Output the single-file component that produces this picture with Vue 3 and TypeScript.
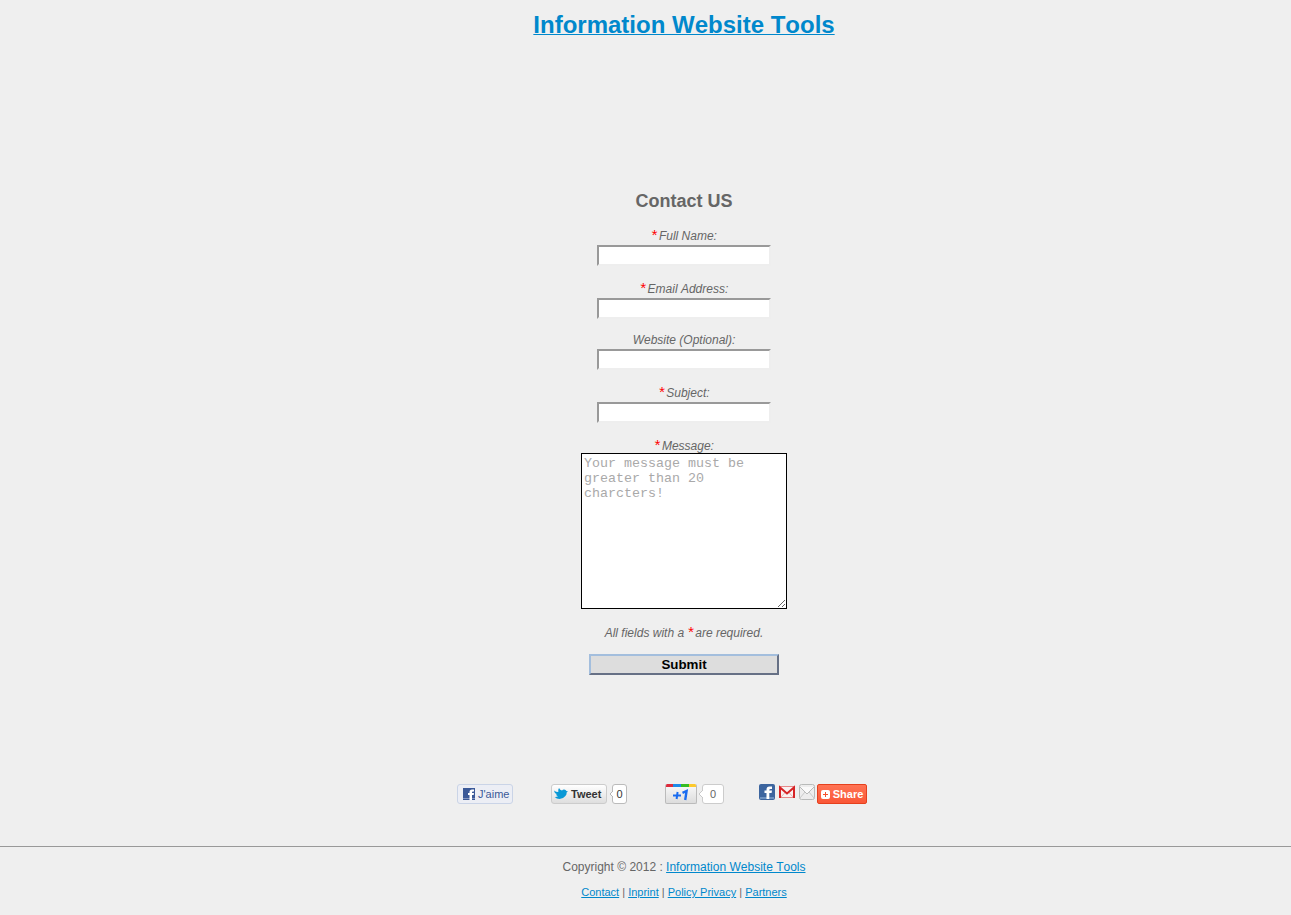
<script setup lang="ts">
interface Field {
  id: string
  label: string
  type: string
  required: boolean
}

const fields: Field[] = [
  { id: 'name', label: 'Full Name:', type: 'text', required: true },
  { id: 'email', label: 'Email Address:', type: 'text', required: true },
  { id: 'website', label: 'Website (Optional):', type: 'text', required: false },
  { id: 'subject', label: 'Subject:', type: 'text', required: true },
]

const footerLinks: string[] = ['Contact', 'Inprint', 'Policy Privacy', 'Partners']
</script>

<template>
  <div class="page">
    <header class="inset">
      <h1><a href="#">Information Website Tools</a></h1>
    </header>

    <main class="inset">
      <h2>Contact US</h2>
      <form @submit.prevent>
        <div v-for="f in fields" :key="f.id" class="field">
          <label :for="f.id" :class="{ plain: !f.required }"><span v-if="f.required" class="star">*</span>{{ f.label }}</label>
          <input :id="f.id" :type="f.type" />
        </div>
        <div class="field message">
          <label for="message"><span class="star">*</span>Message:</label>
          <textarea id="message" placeholder="Your message must be greater than 20 charcters!"></textarea>
        </div>
        <p class="note">All fields with a <span class="star">*</span>are required.</p>
        <button type="submit" class="submit">Submit</button>
      </form>
    </main>

    <section class="social">
      <div class="cell">
        <button type="button" class="like">
          <svg width="12" height="12" viewBox="0 0 12 12">
            <rect width="12" height="12" fill="#3b5998" />
            <rect y="10" width="12" height="1" fill="#8496c0" />
            <path d="M6.500 12V7H5V5H6.500V4Q6.500 1.500 9 1.500H11V3.500H10Q9 3.500 9 4.500V5H11L10.700 7H9V12Z" fill="#fff" />
          </svg>
          J'aime
        </button>
      </div>
      <div class="cell">
        <button type="button" class="tweet">
          <svg width="14" height="12" viewBox="0 0 14 12">
            <path d="M0 2.500Q2 4 4.300 4Q3.900 1.500 5 0Q6 2 8 2.600Q9.300 1 11 1.700Q12 2 12.400 3L14 3.400L12.600 4.500Q13 6 11.400 8Q9 11 5.500 11Q2.500 11 .7 9Q3 9.100 4 8.200Q2.300 7.800 2 6.500L3 6.300Q.2 5.200 0 2.500Z" fill="#0a99d6" />
          </svg>
          Tweet
        </button>
        <span class="count">
          <svg class="tip" width="4" height="6" viewBox="0 0 4 6"><path d="M4 0L1 3L4 6" fill="#fff" stroke="#b5b5b5" /></svg>0</span>
      </div>
      <div class="cell">
        <button type="button" class="plus" aria-label="+1">
          <span class="stripes"><i class="red"></i><i class="blue"></i><i class="green"></i><i class="yellow"></i></span>
          <svg width="16" height="12" viewBox="0 0 16 12" fill="none" stroke="#1a6cf0" stroke-width="2">
            <path d="M0 6.500H8M4.600 3L3.600 10" />
            <path d="M9.500 3.800L13.600 2L12.200 11" stroke-width="2.400" />
          </svg>
        </button>
        <span class="count wide">
          <svg class="tip" width="5" height="8" viewBox="0 0 5 8"><path d="M5 0L1 4L5 8" fill="#fff" stroke="#c8c8c8" /></svg>0</span>
      </div>
      <div class="cell share-cell">
        <a href="#" aria-label="Facebook">
          <svg width="16" height="16" viewBox="0 0 16 16">
            <rect width="16" height="16" rx="2" fill="#3c659f" />
            <rect x="1" y="13" width="14" height="2" fill="#6c91c0" />
            <path d="M7.500 15V9H5.500V6.500H7.500V5.500Q7.500 2.500 10.500 2.500H13V5H11.500Q10.300 5 10.300 6V6.500H13L12.600 9H10.300V15Z" fill="#fff" />
          </svg>
        </a>
        <a href="#" aria-label="Gmail">
          <svg width="16" height="16" viewBox="0 0 16 16">
            <rect y="2" width="16" height="12" rx="1" fill="#f9f1f1" />
            <path d="M2 13L6.500 8M14 13L9.500 8" fill="none" stroke="#e5b5b5" />
            <path d="M1 2.500H15M1 13.500H15" stroke="#e68989" />
            <path d="M1 14V3.500L8 9.500L15 3.500V14" fill="none" stroke="#d62326" stroke-width="2" />
          </svg>
        </a>
        <a href="#" aria-label="Email">
          <svg width="16" height="16" viewBox="0 0 16 16" fill="none">
            <rect x=".5" y=".5" width="15" height="15" rx="2" fill="#ededed" stroke="#b8bab9" />
            <path d="M1 3L8 10L15 3" fill="#fafafa" stroke="#b8bab9" />
            <path d="M1 14L6 8M15 14L10 8" stroke="#c8caca" />
          </svg>
        </a>
        <button type="button" class="share">
          <svg width="9" height="9" viewBox="0 0 9 9">
            <rect width="9" height="9" rx="2" fill="#fff" />
            <path d="M4.500 2V7M2 4.500H7" stroke="#f4512f" />
          </svg>
          Share
        </button>
      </div>
    </section>

    <footer>
      <p>Copyright © 2012 : <a href="#">Information Website Tools</a></p>
      <nav>
        <template v-for="(l, i) in footerLinks" :key="l"><template v-if="i > 0"> | </template><a href="#">{{ l }}</a></template>
      </nav>
    </footer>
  </div>
</template>

<style>
body {
  margin: 0;
  background: #efefef;
}
</style>

<style scoped>
.page {
  color: #666;
  font: 12px/16px "Liberation Sans", Arial, sans-serif;
  font-kerning: none;
  text-align: center;
}
.inset,
footer {
  padding-left: 77px;
}
a {
  color: #08c;
}
h1,
h2,
p {
  margin: 0;
}
h1 {
  padding-top: 11px;
  font-size: 24px;
  line-height: 28px;
}
h1 a {
  text-decoration-thickness: 1px;
}
h2 {
  margin-top: 151px;
  margin-bottom: 14px;
  font-size: 18px;
  line-height: 22px;
}
form {
  display: flex;
  flex-direction: column;
  align-items: center;
}
.field {
  display: flex;
  flex-direction: column;
  align-items: center;
  margin-bottom: 13px;
}
label {
  height: 19px;
  font-style: italic;
  line-height: 21px;
}
label.plain {
  height: 17px;
  line-height: 17px;
}
.message label {
  height: 17px;
}
.note {
  font-style: italic;
  line-height: 23px;
}
.star {
  margin-right: 2px;
  color: #f00;
  font-size: 15px;
  line-height: 16px;
}
input {
  box-sizing: border-box;
  width: 174px;
  height: 21px;
  padding: 1px;
  border: 2px solid;
  border-color: #999 #eee #eee #999;
  background: #fff;
}
textarea {
  box-sizing: border-box;
  width: 206px;
  height: 156px;
  margin: 0;
  padding: 2px;
  border: 1px solid #000;
  background: #fff;
  font-family: "Liberation Mono", monospace;
}
textarea::placeholder {
  color: #a9a9a9;
}
.submit {
  box-sizing: border-box;
  width: 190px;
  height: 21px;
  margin-top: 9px;
  padding: 0;
  border: 2px solid;
  border-color: #a3bedd #667085 #667085 #a3bedd;
  background: #ddd;
  color: #000;
  font-family: "Liberation Sans", Arial, sans-serif;
  font-weight: bold;
}
.social {
  display: grid;
  grid-template-columns: 94px 114px 94px 110px;
  justify-content: center;
  margin-top: 109px;
  padding-left: 35px;
}
.cell {
  display: flex;
  align-items: flex-start;
}
.social button {
  display: flex;
  box-sizing: border-box;
  height: 20px;
  align-items: center;
  gap: 3px;
  padding: 0;
  font: 11px/14px "Liberation Sans", Arial, sans-serif;
  white-space: nowrap;
}
.social button.like {
  width: 56px;
  padding-left: 5px;
  border: 1px solid #cad4e7;
  border-radius: 3px;
  background: #eceef5;
  color: #3b5998;
}
.social button.tweet {
  width: 56px;
  padding-left: 2px;
  padding-bottom: 1px;
  border: 1px solid #ccc;
  border-radius: 3px;
  background: linear-gradient(#fff, #dedede);
  color: #333;
  font-weight: bold;
}
.count {
  position: relative;
  box-sizing: border-box;
  width: 15px;
  height: 20px;
  margin-left: 5px;
  border: 1px solid #bbb;
  border-radius: 3px;
  background: #fff;
  color: #333;
  font-size: 11px;
  line-height: 18px;
}
.count.wide {
  width: 22px;
  border-color: #ccc;
  color: #666;
}
.tip {
  position: absolute;
  top: 6px;
  left: -4px;
}
.wide .tip {
  top: 5px;
  left: -5px;
}
.social button.plus {
  width: 32px;
  flex-direction: column;
  gap: 2px;
  overflow: hidden;
  border: 1px solid #bbb;
  border-top: 0;
  border-radius: 2px;
  background: linear-gradient(#fafafa, #ddd);
}
.stripes {
  display: flex;
  width: 32px;
  height: 3px;
  flex: none;
}
.stripes i {
  flex: 1;
}
.red { background: #dd2b3c; }
.blue { background: #1d8ae8; }
.green { background: #35bd22; }
.yellow { background: #fdc92c; }
.share-cell a {
  height: 16px;
  margin-right: 4px;
}
.share-cell a svg {
  display: block;
}
.share-cell a:nth-of-type(3) {
  margin-right: 2px;
}
.social button.share {
  width: 50px;
  justify-content: center;
  border: 1px solid #e5401d;
  border-radius: 2px;
  background: linear-gradient(#ff7354, #fa5737);
  color: #fff;
  font-weight: bold;
}
footer {
  margin-top: 42px;
  padding-top: 12px;
  padding-bottom: 14px;
  border-top: 1px solid #999;
}
nav {
  margin-top: 10px;
  font-size: 11px;
  font-kerning: normal;
  line-height: 14px;
}
</style>
